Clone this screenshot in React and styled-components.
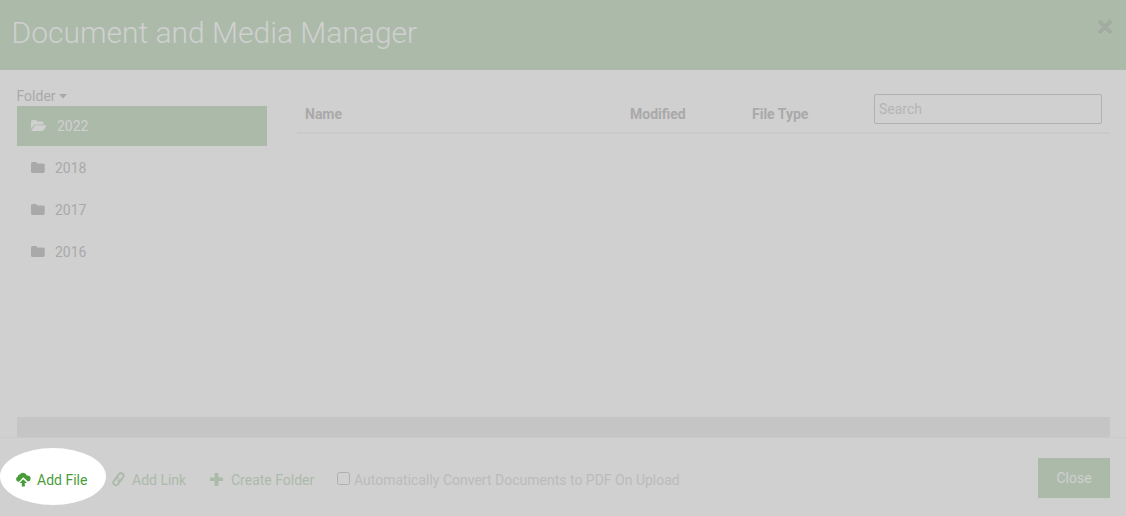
import React, { useState } from "react";
import styled, { createGlobalStyle } from "styled-components";

const folders = ["2022", "2018", "2017", "2016"];

const FolderIcon = () => (
  <svg width="14" height="12" viewBox="0 0 14 12" fill="currentColor">
    <path d="M0 1.6Q0 0 1.7 0H4.5Q5.9 0 6.1 1.4H12Q13.7 1.4 13.7 3V9.4Q13.7 11 12 11H1.7Q0 11 0 9.4Z" />
  </svg>
);

const FolderOpenIcon = () => (
  <svg width="16" height="12" viewBox="0 0 16 12" fill="currentColor">
    <path d="M0 9V1.6Q0 0 1.6 0H4.4Q5.8 0 6 1.4H11Q12.6 1.4 12.6 3V4.5H4.6Q3.4 4.5 2.6 5.5Z" />
    <path d="M.5 10.7 3.3 6.1Q3.9 5.2 5 5.2H14.8Q15.8 5.2 15.2 6.1L12.7 10.2Q12.2 11 11.2 11H1Q.5 11 .5 10.7Z" />
  </svg>
);

const CloudUploadIcon = () => (
  <svg width="15" height="15" viewBox="0 0 15 15" fill="currentColor">
    <path d="M3 9.7Q.1 9.3.1 6.9.1 4.9 1.9 4.4 1.7 2.4 3.8 2.5 4.8.8 7 .8 9.9.8 10.9 3.4 14.6 3.2 14.6 6.4 14.6 9.2 11.8 9.5L7.3 5.2Z" />
    <path d="M7.3 7.2 11 10.9H8.8V14.4H5.8V10.9H3.6Z" />
  </svg>
);

const ChainIcon = () => (
  <svg
    width="13"
    height="15"
    viewBox="0 0 13 15"
    fill="none"
    stroke="currentColor"
    strokeWidth="1.9"
    strokeLinecap="round"
  >
    <path d="M4.4 6.6Q4.3 5.4 5.1 4.4L7 2.1Q8.6.3 10.5 1.7 12.4 3.3 11.1 5.2L9.3 7.6Q8.1 9.1 6.4 8.7" />
    <path d="M8.3 7.6Q8.4 8.9 7.6 9.9L5.8 12.3Q4.3 14.1 2.3 12.8.4 11.2 1.7 9.3L3.4 6.9Q4.6 5.4 6.3 5.8" />
  </svg>
);

const PlusIcon = () => (
  <svg width="13" height="13" viewBox="0 0 13 13" fill="currentColor">
    <path d="M4.6.3Q4.6 0 4.9 0H8.1Q8.4 0 8.4.3V4.6H12.7Q13 4.6 13 4.9V7.6Q13 8 12.7 8H8.4V12.7Q8.4 13 8.1 13H4.9Q4.6 13 4.6 12.7V8H.3Q0 8 0 7.6V4.9Q0 4.6.3 4.6H4.6Z" />
  </svg>
);

const CloseIcon = () => (
  <svg width="16" height="18" viewBox="0 0 16 18" strokeWidth="4.4">
    <path d="M1.9 3 14.1 15.2M14.1 3 1.9 15.2" stroke="#b7c1b5" />
    <path d="M1.9 2 14.1 14.2M14.1 2 1.9 14.2" stroke="#a2aca0" />
  </svg>
);

const App = () => {
  const [selected, setSelected] = useState("2022");
  const [search, setSearch] = useState("");
  const [convert, setConvert] = useState(false);

  return (
    <>
      <GlobalStyle />
      <Modal>
        <Header>
          <Title>Document and Media Manager</Title>
          <Dismiss type="button" aria-label="Dismiss">
            <CloseIcon />
          </Dismiss>
        </Header>
        <Body>
          <Panels>
            <Sidebar>
              <FolderMenu type="button">
                Folder <Caret />
              </FolderMenu>
              <FolderList>
                {folders.map((name) => (
                  <FolderItem
                    key={name}
                    $active={name === selected}
                    onClick={() => setSelected(name)}
                  >
                    {name === selected ? <FolderOpenIcon /> : <FolderIcon />}
                    {name}
                  </FolderItem>
                ))}
              </FolderList>
            </Sidebar>
            <FileHeader>
              <HeadCell>Name</HeadCell>
              <HeadCell>Modified</HeadCell>
              <HeadCell>File Type</HeadCell>
              <SearchInput
                type="text"
                placeholder="Search"
                value={search}
                onChange={(e) => setSearch(e.target.value)}
              />
            </FileHeader>
          </Panels>
          <StatusBar />
        </Body>
        <Footer>
          <Action type="button" $spotlight $width={96} $gap={6}>
            <CloudUploadIcon />
            <span>Add File</span>
          </Action>
          <Action type="button" $width={98} $gap={7}>
            <ChainIcon />
            <span>Add Link</span>
          </Action>
          <Action type="button" $width={127} $gap={8}>
            <PlusIcon />
            <span>Create Folder</span>
          </Action>
          <ConvertLabel>
            <Checkbox
              type="checkbox"
              checked={convert}
              onChange={(e) => setConvert(e.target.checked)}
            />
            Automatically Convert Documents to PDF On Upload
          </ConvertLabel>
          <CloseButton type="button">Close</CloseButton>
        </Footer>
      </Modal>
    </>
  );
};

export default App;

const GlobalStyle = createGlobalStyle`
  * {
    box-sizing: border-box;
  }
  body {
    margin: 0;
    background: #d0d0d0;
    font-family: Roboto, "Liberation Sans", sans-serif;
    font-size: 14px;
    line-height: 20px;
    color: #a9a9a9;
  }
  button,
  input {
    font: inherit;
    color: inherit;
  }
  svg {
    flex: none;
  }
`;

const Modal = styled.div`
  display: flex;
  flex-direction: column;
  width: 1126px;
  height: 516px;
  overflow: hidden;
`;

const Header = styled.header`
  display: flex;
  justify-content: space-between;
  align-items: flex-start;
  height: 70px;
  padding: 13px 13px 0 11.5px;
  background: #acbaaa;
`;

const Title = styled.h1`
  margin: 0;
  font-size: 30px;
  font-weight: 300;
  line-height: 40px;
  color: #d0d0d0;
`;

const Dismiss = styled.button`
  display: flex;
  margin-top: 6px;
  padding: 0;
  border: none;
  background: none;
`;

const Body = styled.main`
  display: flex;
  flex-direction: column;
  justify-content: space-between;
  height: 367px;
  padding: 16px 16px 0 17px;
`;

const Panels = styled.div`
  display: flex;
  align-items: flex-start;
  justify-content: space-between;
`;

const Sidebar = styled.aside`
  width: 250px;
`;

const FolderMenu = styled.button`
  display: flex;
  align-items: center;
  gap: 3px;
  height: 20px;
  margin-left: -0.5px;
  padding: 0;
  border: none;
  background: none;
`;

const Caret = styled.span`
  width: 9px;
  height: 5px;
  background: currentColor;
  clip-path: polygon(0 0, 100% 0, 50% 100%);
`;

const FolderList = styled.ul`
  display: flex;
  flex-direction: column;
  gap: 2px;
  margin: 0;
  padding: 0;
  list-style: none;
`;

const FolderItem = styled.li`
  display: flex;
  align-items: center;
  gap: 10px;
  height: 40px;
  padding-left: 14px;
  cursor: pointer;
  color: ${(props) => (props.$active ? "#d0d0d0" : "#a9a9a9")};
  background: ${(props) => (props.$active ? "#acbaaa" : "transparent")};
`;

const FileHeader = styled.div`
  display: grid;
  grid-template-columns: 325px 122px 122px 228px;
  align-items: center;
  width: 813px;
  height: 48px;
  padding: 0 0 0 8px;
  border-bottom: 2px solid #cacaca;
`;

const HeadCell = styled.div`
  padding-top: 9px;
  font-weight: 700;
`;

const SearchInput = styled.input`
  width: 228px;
  height: 30px;
  padding: 0 4px;
  border: 1px solid #b0b0b0;
  border-radius: 2px;
  outline: none;
  background: transparent;
  &::placeholder {
    color: #b5b5b5;
    opacity: 1;
  }
`;

const StatusBar = styled.div`
  height: 20px;
  background: #c5c5c5;
`;

const Footer = styled.footer`
  display: flex;
  align-items: center;
  height: 79px;
  padding: 5px 16px 0 16px;
  border-top: 1px solid #cacaca;
`;

const Action = styled.button`
  position: relative;
  display: flex;
  align-items: center;
  gap: ${(props) => props.$gap}px;
  width: ${(props) => props.$width}px;
  padding: 0;
  border: none;
  background: none;
  color: ${(props) => (props.$spotlight ? "#4a9c3b" : "#acbaaa")};
  white-space: nowrap;
  svg,
  span {
    position: relative;
  }
  &::before {
    content: "";
    display: ${(props) => (props.$spotlight ? "block" : "none")};
    position: absolute;
    left: -16px;
    top: -22px;
    width: 106px;
    height: 57px;
    border-radius: 50%;
    background: #fff;
  }
`;

const ConvertLabel = styled.label`
  display: flex;
  align-items: center;
  gap: 4px;
  color: #bbbbbb;
`;

const Checkbox = styled.input`
  appearance: none;
  width: 13px;
  height: 13px;
  margin: 0 0 3px;
  border: 1px solid #b0b0b0;
  border-radius: 2.5px;
  &:checked {
    background: #acbaaa;
  }
`;

const CloseButton = styled.button`
  width: 72px;
  height: 40px;
  margin: 0 0 4px auto;
  padding: 0;
  border: none;
  background: #acbaaa;
  color: #d0d0d0;
`;
